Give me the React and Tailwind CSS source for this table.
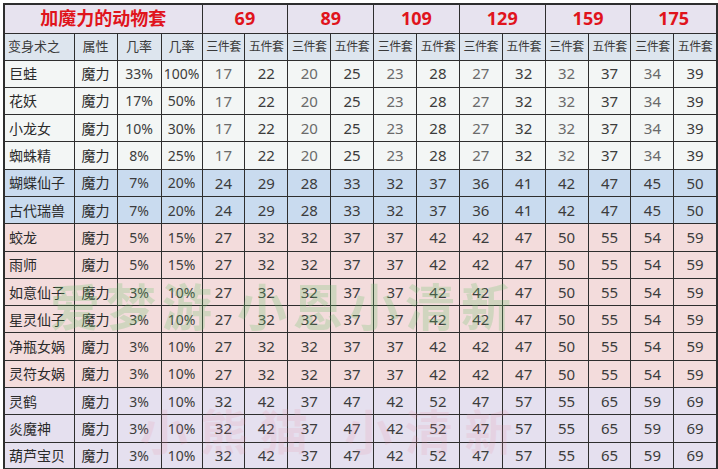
import React from "react";

const prices = ["69", "89", "109", "129", "159", "175"];

const rows = [
  { name: "巨蛙", a: "33%", b: "100%", v: [17, 22, 20, 25, 23, 28, 27, 32, 32, 37, 34, 39], tone: "plain" },
  { name: "花妖", a: "17%", b: "50%", v: [17, 22, 20, 25, 23, 28, 27, 32, 32, 37, 34, 39], tone: "plain" },
  { name: "小龙女", a: "10%", b: "30%", v: [17, 22, 20, 25, 23, 28, 27, 32, 32, 37, 34, 39], tone: "plain" },
  { name: "蜘蛛精", a: "8%", b: "25%", v: [17, 22, 20, 25, 23, 28, 27, 32, 32, 37, 34, 39], tone: "plain" },
  { name: "蝴蝶仙子", a: "7%", b: "20%", v: [24, 29, 28, 33, 32, 37, 36, 41, 42, 47, 45, 50], tone: "blue" },
  { name: "古代瑞兽", a: "7%", b: "20%", v: [24, 29, 28, 33, 32, 37, 36, 41, 42, 47, 45, 50], tone: "blue" },
  { name: "蛟龙", a: "5%", b: "15%", v: [27, 32, 32, 37, 37, 42, 42, 47, 50, 55, 54, 59], tone: "pink" },
  { name: "雨师", a: "5%", b: "15%", v: [27, 32, 32, 37, 37, 42, 42, 47, 50, 55, 54, 59], tone: "pink" },
  { name: "如意仙子", a: "3%", b: "10%", v: [27, 32, 32, 37, 37, 42, 42, 47, 50, 55, 54, 59], tone: "pink" },
  { name: "星灵仙子", a: "3%", b: "10%", v: [27, 32, 32, 37, 37, 42, 42, 47, 50, 55, 54, 59], tone: "pink" },
  { name: "净瓶女娲", a: "3%", b: "10%", v: [27, 32, 32, 37, 37, 42, 42, 47, 50, 55, 54, 59], tone: "pink" },
  { name: "灵符女娲", a: "3%", b: "10%", v: [27, 32, 32, 37, 37, 42, 42, 47, 50, 55, 54, 59], tone: "pink" },
  { name: "灵鹤", a: "3%", b: "10%", v: [32, 42, 37, 47, 42, 52, 47, 57, 55, 65, 59, 69], tone: "lilac" },
  { name: "炎魔神", a: "3%", b: "10%", v: [32, 42, 37, 47, 42, 52, 47, 57, 55, 65, 59, 69], tone: "lilac" },
  { name: "葫芦宝贝", a: "3%", b: "10%", v: [32, 42, 37, 47, 42, 52, 47, 57, 55, 65, 59, 69], tone: "lilac" },
];

const toneBg = {
  plain: "bg-[#f3f6f5]",
  blue: "bg-[#c9dbef]",
  pink: "bg-[#f3dcdc]",
  lilac: "bg-[#e5e0ef]",
};

const cell = "border border-[#2e2e2e] text-center";

export default function App() {
  return (
    <div className="relative w-[718px] h-[469px] overflow-hidden bg-white pl-[3px] pt-[3px] font-['Noto_Sans','Noto_Sans_CJK_SC',sans-serif]">
      <table className="table-fixed border-collapse w-[713px] border-2 border-[#2e2e2e]">
        <colgroup>
          <col className="w-[70px]" />
          <col className="w-[43px]" />
          <col className="w-[44px]" />
          <col className="w-[41px]" />
          {Array.from({ length: 12 }).map((_, i) => (
            <col key={i} className="w-[42.9px]" />
          ))}
        </colgroup>
        <thead>
          <tr className="h-[29px] bg-[#e7e3ef]">
            <th colSpan={4} className={`${cell} text-[18px] font-bold text-[#e0141c]`}>
              加魔力的动物套
            </th>
            {prices.map((p) => (
              <th key={p} colSpan={2} className={`${cell} text-[18px] font-bold text-[#e0141c]`}>
                {p}
              </th>
            ))}
          </tr>
          <tr className="h-[27px] bg-[#dde5ee] text-[12px] text-[#3a3a3a] font-normal">
            <td className={`${cell} !text-left pl-[3px] text-[13px]`}>变身术之</td>
            <td className={`${cell} text-[13px]`}>属性</td>
            <td className={`${cell} text-[13px]`}>几率</td>
            <td className={`${cell} text-[13px]`}>几率</td>
            {prices.map((p) => (
              <React.Fragment key={p}>
                <td className={`${cell} tracking-[-0.5px]`}>三件套</td>
                <td className={`${cell} tracking-[-0.5px]`}>五件套</td>
              </React.Fragment>
            ))}
          </tr>
        </thead>
        <tbody>
          {rows.map((r) => (
            <tr key={r.name} className={`h-[27.3px] ${toneBg[r.tone]} text-[14px] text-[#3c3c3c]`}>
              <td className={`${cell} !text-left pl-[4px] text-[#2a2a2a]`}>{r.name}</td>
              <td className={`${cell} text-[#2a2a2a]`}>魔力</td>
              <td className={cell}>{r.a}</td>
              <td className={cell}>{r.b}</td>
              {r.v.map((n, i) => (
                <td key={i} className={`${cell} text-[15px] ${r.tone === "plain" && i % 2 === 0 ? "text-[#6a6a6a]" : ""}`}>
                  {n}
                </td>
              ))}
            </tr>
          ))}
        </tbody>
      </table>

      {/* faint watermarks over the table */}
      <div aria-hidden="true" className="pointer-events-none absolute left-[50px] top-[282px] leading-none text-[50px] font-bold text-[#6cc46c] opacity-25 tracking-[6px] whitespace-nowrap">
        爱梦游 小恩小清新
      </div>
      <div aria-hidden="true" className="pointer-events-none absolute left-[140px] top-[408px] leading-none text-[48px] font-bold text-[#e88aa0] opacity-15 tracking-[12px] whitespace-nowrap">
        小熊猫 小清新
      </div>
    </div>
  );
}
